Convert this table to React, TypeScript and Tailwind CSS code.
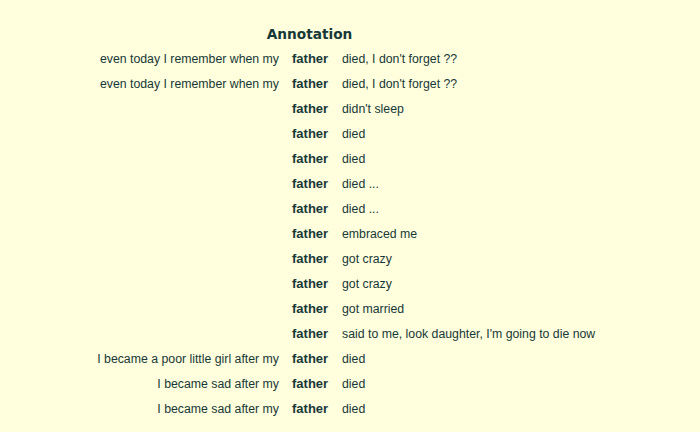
const rows = [
  { left: 'even today I remember when my', right: "died, I don't forget ??" },
  { left: 'even today I remember when my', right: "died, I don't forget ??" },
  { left: '', right: "didn't sleep" },
  { left: '', right: 'died' },
  { left: '', right: 'died' },
  { left: '', right: 'died ...' },
  { left: '', right: 'died ...' },
  { left: '', right: 'embraced me' },
  { left: '', right: 'got crazy' },
  { left: '', right: 'got crazy' },
  { left: '', right: 'got married' },
  { left: '', right: "said to me, look daughter, I'm going to die now" },
  { left: 'I became a poor little girl after my', right: 'died' },
  { left: 'I became sad after my', right: 'died' },
  { left: 'I became sad after my', right: 'died' },
];

export default function App() {
  return (
    <div className="min-h-[432px] w-[700px] bg-[#ffffdd] text-[#173838] font-['Liberation_Sans',Arial,sans-serif]">
      <h1 className="w-[619px] pt-[24px] text-center font-['DejaVu_Sans',sans-serif] text-[13.7px] font-bold leading-[20px]">
        Annotation
      </h1>
      <div className="pt-[2px]">
        {rows.map((r, i) => (
          <div key={i} className="flex h-[25px] items-baseline text-[12.3px] leading-[25px]">
            <div className="w-[279px] text-right">{r.left}</div>
            <div className="ml-[13px] w-[50px] text-[13px] font-bold">father</div>
            <div>{r.right}</div>
          </div>
        ))}
      </div>
    </div>
  );
}
